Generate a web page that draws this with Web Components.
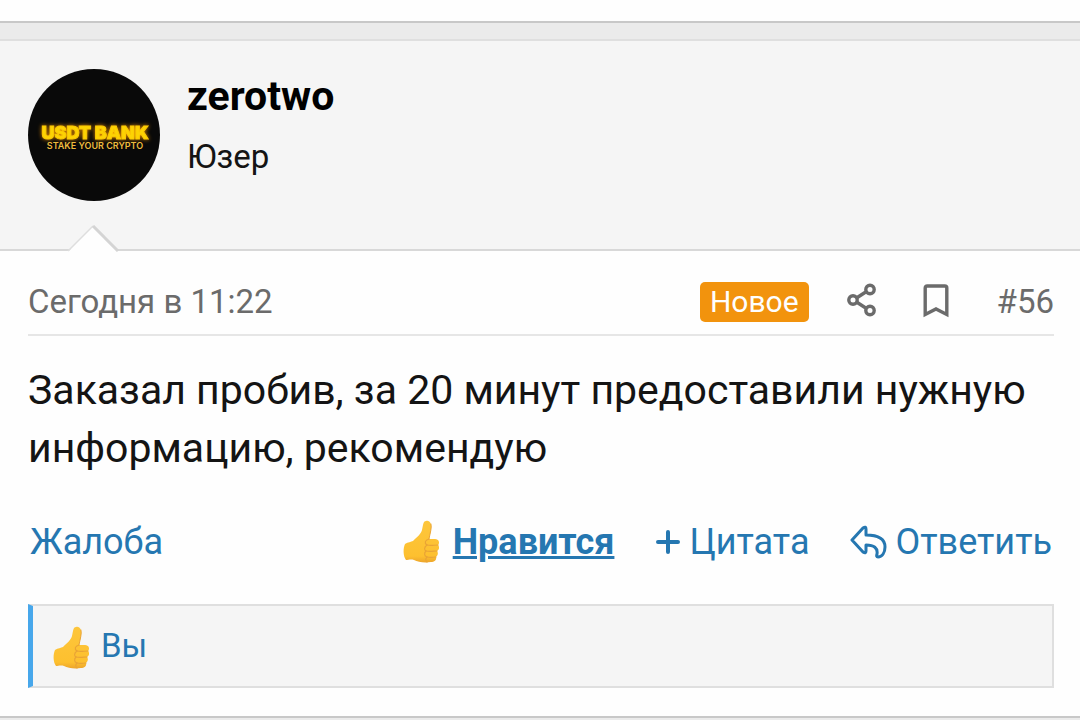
<!DOCTYPE html>
<html lang="ru">
<head>
<meta charset="utf-8">
<meta name="viewport" content="width=device-width, initial-scale=1">
<title>zerotwo #56</title>
<style>
  :root {
    --link: #2577b1;
    --muted: #6b6b6b;
    --line: #dfdfdf;
    --shade: #f5f5f5;
  }
  body {
    margin: 0;
    background: #ebebeb;
    color: #141414;
    font-family: Roboto, "Noto Sans", sans-serif;
    font-size: 33px;
    overflow-x: hidden;
  }
</style>
</head>
<body>
<forum-thread>
  <forum-post>
    <user-avatar slot="avatar"></user-avatar>
    <a slot="name" href="#zerotwo">zerotwo</a>
    <span slot="role">Юзер</span>
    <time slot="date">Сегодня в 11:22</time>
    <a slot="number" href="#56">#56</a>
    <p slot="message">Заказал пробив, за 20 минут предоставили нужную информацию, рекомендую</p>
    <post-actions slot="actions"></post-actions>
    <reaction-bar slot="reactions"><a href="#me">Вы</a></reaction-bar>
  </forum-post>
</forum-thread>

<script>
// Page frame, the end of the previous post stays visible on top
class ForumThread extends HTMLElement {
  constructor() {
    super();
    this.attachShadow({ mode: 'open' });
  }

  connectedCallback() {
    this.shadowRoot.innerHTML = `
      <style>
        :host { display: flex; flex-direction: column; gap: 16px; }
        .previous { height: 21px; background: #fefefe; border-bottom: 2px solid #c8c8c8; }
      </style>
      <div class="previous"></div>
      <slot></slot>
    `;
  }
}

// Round avatar with logo
class UserAvatar extends HTMLElement {
  constructor() {
    super();
    this.attachShadow({ mode: 'open' });
  }

  connectedCallback() {
    this.shadowRoot.innerHTML = `
      <style>
        :host { display: block; width: 132px; height: 132px; flex: none; }
        svg { display: block; border-radius: 50%; background: #090909; }
        text { font-family: Inter, sans-serif; text-anchor: middle; }
        .title {
          font-size: 18px;
          font-weight: 900;
          fill: #fcd303;
          stroke: #fcc803;
          stroke-width: 1;
          filter: drop-shadow(0 0 2px #e08a00);
        }
        .tagline { font-size: 9px; font-weight: 600; fill: #eebb3c; }
      </style>
      <svg width="132" height="132" viewBox="0 0 132 132">
        <text class="title" x="67" y="70">USDT BANK</text>
        <text class="tagline" x="67" y="80">STAKE YOUR CRYPTO</text>
      </svg>
    `;
  }
}

// Thumbs up reaction icon
class LikeIcon extends HTMLElement {
  constructor() {
    super();
    this.attachShadow({ mode: 'open' });
  }

  connectedCallback() {
    this.shadowRoot.innerHTML = `
      <style>
        :host { display: block; flex: none; }
        svg { display: block; }
      </style>
      <svg width="38" height="44" viewBox="0 0 38 44" aria-hidden="true">
        <defs>
          <linearGradient id="skin" x1="0" y1="0" x2="0" y2="1">
            <stop offset="0" stop-color="#fdc63c"/>
            <stop offset="0.85" stop-color="#fdc02f"/>
            <stop offset="1" stop-color="#eda52b"/>
          </linearGradient>
        </defs>
        <path fill="url(#skin)" d="M2 24 C5 22 8 22 10 21 C13 18 18 14 19 10 C20 6 20 1 23 1 C27 0 29 4 28 9 C28 13 26 16 26 19 L32 19 C36 19 37 23 35 25 C37 27 36 30 34 31 C36 34 34 36 33 37 C34 40 31 42 28 42 C21 43 15 42 11 40 C8 39 5 40 3 40 C0 36 0 28 2 24 Z"/>
        <g fill="none" stroke="#e9a436" stroke-width="1.2" stroke-linecap="round">
          <path d="M26 19 C22 20 21 23 24 25 C21 27 21 30 23 31 C21 33 21 36 24 37 C22 39 23 41 24 42"/>
          <path d="M24 25 C28 26 31 25 35 25 M23 31 C27 32 31 31 34 31 M24 37 C28 38 30 37 33 37"/>
          <path d="M28 4 C29 8 27 13 26 19" stroke-width="1"/>
        </g>
      </svg>
    `;
  }
}

// Links under the message
class PostActions extends HTMLElement {
  constructor() {
    super();
    this.attachShadow({ mode: 'open' });
  }

  connectedCallback() {
    this.shadowRoot.innerHTML = `
      <style>
        :host { display: flex; justify-content: space-between; align-items: center; padding: 0 2px; font-size: 36px; line-height: 44px; }
        a { display: flex; align-items: center; color: var(--link); text-decoration: none; }
        .main { display: flex; gap: 41px; }
        .like { gap: 12px; font-weight: 700; }
        .like span { text-decoration: underline; text-decoration-thickness: 3px; }
        .quote, .reply { gap: 8px; }
        svg { display: block; fill: none; stroke: currentColor; }
      </style>
      <a href="#report">Жалоба</a>
      <div class="main">
        <a class="like" href="#like"><like-icon></like-icon><span>Нравится</span></a>
        <a class="quote" href="#quote">
          <svg width="26" height="26" viewBox="0 0 26 26" stroke-width="4" stroke-linecap="round" aria-hidden="true">
            <path d="M13 3 V23 M3 13 H23"/>
          </svg>
          <span>Цитата</span>
        </a>
        <a class="reply" href="#reply">
          <svg width="37" height="34" viewBox="0 0 37 34" stroke-width="3" stroke-linejoin="round" aria-hidden="true">
            <path d="M2 15 L13 3 Q16 1 16 4 V10 C28 10 35 13 35 22 C35 28 32 32 28 32 Q26 32 27 29 C28 23 24 20 16 20 V26 Q16 29 13 27 Z"/>
          </svg>
          <span>Ответить</span>
        </a>
      </div>
    `;
  }
}

// Who reacted to the post
class ReactionBar extends HTMLElement {
  constructor() {
    super();
    this.attachShadow({ mode: 'open' });
  }

  connectedCallback() {
    this.shadowRoot.innerHTML = `
      <style>
        :host {
          display: flex;
          align-items: center;
          gap: 10px;
          padding: 16px 20px;
          border: 2px solid var(--line);
          border-left: 5px solid #47a7eb;
          background: var(--shade);
          font-size: 33px;
          line-height: 48px;
        }
        like-icon { padding-top: 4px; }
        ::slotted(a) { color: var(--link); text-decoration: none; }
      </style>
      <like-icon></like-icon>
      <slot></slot>
    `;
  }
}

class ForumPost extends HTMLElement {
  constructor() {
    super();
    this.attachShadow({ mode: 'open' });
  }

  connectedCallback() {
    this.shadowRoot.innerHTML = `
      <style>
        :host {
          display: block;
          background: #fefefe;
          border-top: 2px solid var(--line);
          border-bottom: 2px solid #c8c8c8;
        }
        .user {
          position: relative;
          display: flex;
          gap: 27px;
          padding: 28px 28px 48px;
          background: var(--shade);
          border-bottom: 2px solid #d8d8d8;
        }
        .arrow { position: absolute; left: 67px; bottom: -3px; display: block; }
        .info { display: flex; flex-direction: column; gap: 10px; }
        ::slotted([slot="name"]) { color: #000; font-size: 41px; font-weight: 700; line-height: 54px; text-decoration: none; }
        ::slotted([slot="role"]) { line-height: 48px; }
        .body { padding: 24px 26px 28px 28px; }
        .meta {
          display: flex;
          align-items: center;
          justify-content: space-between;
          padding-bottom: 6px;
          border-bottom: 2px solid #e6e6e6;
          color: var(--muted);
          line-height: 53px;
        }
        .tools { display: flex; align-items: center; }
        .badge {
          padding: 0 10px;
          border-radius: 5px;
          background: #f2930d;
          color: #fefefe;
          font-size: 30px;
          line-height: 40px;
        }
        button { padding: 0; border: 0; background: none; color: inherit; cursor: pointer; }
        button svg { display: block; fill: none; stroke: currentColor; stroke-width: 3.4; }
        .share { margin-left: 38px; }
        .bookmark { margin-left: 46px; }
        ::slotted([slot="number"]) { margin-left: 48px; color: var(--muted); text-decoration: none; }
        ::slotted([slot="message"]) { margin: 25px 0 43px; font-size: 41px; line-height: 58px; }
        ::slotted([slot="reactions"]) { margin-top: 40px; }
      </style>
      <header class="user">
        <slot name="avatar"></slot>
        <div class="info">
          <slot name="name"></slot>
          <slot name="role"></slot>
        </div>
        <svg class="arrow" width="53" height="27" viewBox="0 0 53 27" aria-hidden="true">
          <path d="M1 27 L26 1 L51 27 Z" fill="#fefefe"/>
          <path d="M1 26 L26 1" fill="none" stroke="#dedede" stroke-width="1.5"/>
          <path d="M26 1 L51 26" fill="none" stroke="#d4d4d4" stroke-width="3"/>
        </svg>
      </header>
      <div class="body">
        <div class="meta">
          <slot name="date"></slot>
          <div class="tools">
            <span class="badge">Новое</span>
            <button class="share" type="button" aria-label="Поделиться">
              <svg width="30" height="38" viewBox="0 0 30 38">
                <circle cx="6" cy="17" r="4.2"/>
                <circle cx="23" cy="6.5" r="4.2"/>
                <circle cx="23" cy="27.5" r="4.2"/>
                <path d="M9.5 15 L19.5 8.5 M9.5 19 L19.5 25.5"/>
              </svg>
            </button>
            <button class="bookmark" type="button" aria-label="Закладка">
              <svg width="26" height="38" viewBox="0 0 26 38">
                <path d="M2.2 31.5 V5 Q2.2 3 4.2 3 H21.8 Q23.8 3 23.8 5 V31.5 L13 26 Z"/>
              </svg>
            </button>
            <slot name="number"></slot>
          </div>
        </div>
        <slot name="message"></slot>
        <slot name="actions"></slot>
        <slot name="reactions"></slot>
      </div>
    `;
  }
}

customElements.define('forum-thread', ForumThread);
customElements.define('user-avatar', UserAvatar);
customElements.define('like-icon', LikeIcon);
customElements.define('post-actions', PostActions);
customElements.define('reaction-bar', ReactionBar);
customElements.define('forum-post', ForumPost);
</script>
</body>
</html>
